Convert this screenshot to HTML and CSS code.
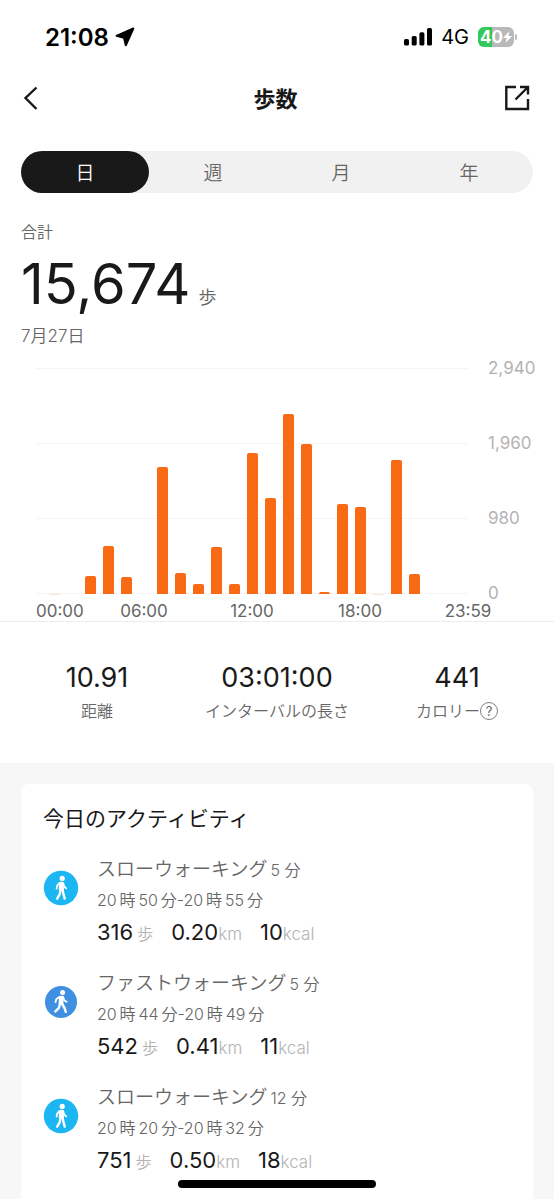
FILE: index.html
```html
<!DOCTYPE html>
<html lang="ja">
  <head>
    <meta charset="UTF-8" />
    <meta name="viewport" content="width=device-width, initial-scale=1.0" />
    <title>歩数</title>
    <link rel="stylesheet" href="styles.css">
  </head>
  <body>
    <div class="statusBar">
      <div class="statusTime">
        <span>21:08</span>
        <svg width="20" height="20" viewBox="0 0 20 20">
          <path d="M18.300 1.500 L1.500 8.800 L9 10.800 L10.800 18.300 Z" fill="#000" stroke="#000" stroke-width="2" stroke-linejoin="round" />
        </svg>
      </div>
      <div class="statusIcons">
        <svg width="28" height="18" viewBox="0 0 28 18">
          <rect x="0" y="11" width="5" height="6.500" rx="1.600" />
          <rect x="7.700" y="8" width="5" height="9.500" rx="1.600" />
          <rect x="15.400" y="4.300" width="5" height="13.200" rx="1.600" />
          <rect x="23" y="0" width="5" height="17.500" rx="1.600" />
        </svg>
        <span class="network">4G</span>
        <div class="battery">
          <span class="batteryLevel">40</span>
          <svg width="9" height="14" viewBox="0 0 10 14">
            <path d="M7 0.500 L0 8 H4 L3 13.500 L10 6 H6 Z" fill="#fff" />
          </svg>
        </div>
      </div>
    </div>

    <header class="navBar">
      <button type="button" class="iconButton" aria-label="戻る">
        <svg width="26" height="26" viewBox="0 0 26 26">
          <path d="M15.500 2.500 L4.500 13 L15.500 24" />
        </svg>
      </button>
      <h1 class="pageTitle">歩数</h1>
      <button type="button" class="iconButton" aria-label="共有">
        <svg width="26" height="26" viewBox="0 0 26 26">
          <path d="M12 2 H2.300 V24 H24 V14 M16 2 H24 V9.500 M23.500 2.500 L11.500 14.500" />
        </svg>
      </button>
    </header>

    <nav class="tabs">
      <button type="button" class="tab tabActive">日</button>
      <button type="button" class="tab">週</button>
      <button type="button" class="tab">月</button>
      <button type="button" class="tab">年</button>
    </nav>

    <section class="summary">
      <p class="summaryLabel">合計</p>
      <p class="summaryValue">15,674<span class="summaryUnit">歩</span></p>
      <p class="summaryLabel summaryDate">7月27日</p>
    </section>

    <section class="chart">
      <div class="plot">
        <div class="bars">
          <span class="bar barFaint" style="height: 0.1%"></span>
          <span class="bar" style="height: 0%"></span>
          <span class="bar" style="height: 8%"></span>
          <span class="bar" style="height: 21.4%"></span>
          <span class="bar" style="height: 7.7%"></span>
          <span class="bar" style="height: 0%"></span>
          <span class="bar" style="height: 56.4%"></span>
          <span class="bar" style="height: 9.3%"></span>
          <span class="bar" style="height: 4.6%"></span>
          <span class="bar" style="height: 20.9%"></span>
          <span class="bar" style="height: 4.5%"></span>
          <span class="bar" style="height: 62.6%"></span>
          <span class="bar" style="height: 42.6%"></span>
          <span class="bar" style="height: 79.5%"></span>
          <span class="bar" style="height: 66.3%"></span>
          <span class="bar" style="height: 0.7%"></span>
          <span class="bar" style="height: 39.8%"></span>
          <span class="bar" style="height: 38.4%"></span>
          <span class="bar barFaint" style="height: 0.2%"></span>
          <span class="bar" style="height: 59.3%"></span>
          <span class="bar" style="height: 8.7%"></span>
          <span class="bar" style="height: 0%"></span>
          <span class="bar" style="height: 0%"></span>
          <span class="bar" style="height: 0%"></span>
        </div>
        <div class="xAxis">
          <span class="hour0">00:00</span>
          <span class="hour6">06:00</span>
          <span class="hour12">12:00</span>
          <span class="hour18">18:00</span>
          <span class="hour24">23:59</span>
        </div>
      </div>
      <div class="yAxis">
        <span>2,940</span>
        <span>1,960</span>
        <span>980</span>
        <span>0</span>
      </div>
    </section>

    <section class="totals">
      <div class="total">
        <p class="totalValue">10.91</p>
        <p class="totalLabel">距離</p>
      </div>
      <div class="total">
        <p class="totalValue">03:01:00</p>
        <p class="totalLabel">インターバルの長さ</p>
      </div>
      <div class="total">
        <p class="totalValue">441</p>
        <p class="totalLabel">
          カロリー<button type="button" class="helpButton">?</button>
        </p>
      </div>
    </section>

    <main class="activities">
      <div class="card">
        <h2 class="cardTitle">今日のアクティビティ</h2>

        <article class="activity">
          <svg class="walkIcon" width="36" height="36" viewBox="0 0 36 36">
            <circle cx="18" cy="18" r="17.200" fill="#1cb7f3" />
            <use href="#slowWalk" />
          </svg>
          <div>
            <h3 class="activityName">スローウォーキング<span class="duration">5 分</span></h3>
            <p class="activityTime">20&thinsp;時&thinsp;50&thinsp;分-20&thinsp;時&thinsp;55&thinsp;分</p>
            <p class="activityStats">
              <span>316<small class="steps">歩</small></span>
              <span>0.20<small>km</small></span>
              <span>10<small>kcal</small></span>
            </p>
          </div>
        </article>

        <article class="activity">
          <svg class="walkIcon" width="36" height="36" viewBox="0 0 36 36">
            <circle cx="18" cy="18" r="16" fill="#3f8fe3" />
            <use href="#fastWalk" />
          </svg>
          <div>
            <h3 class="activityName">ファストウォーキング<span class="duration">5 分</span></h3>
            <p class="activityTime">20&thinsp;時&thinsp;44&thinsp;分-20&thinsp;時&thinsp;49&thinsp;分</p>
            <p class="activityStats">
              <span>542<small class="steps">歩</small></span>
              <span>0.41<small>km</small></span>
              <span>11<small>kcal</small></span>
            </p>
          </div>
        </article>

        <article class="activity">
          <svg class="walkIcon" width="36" height="36" viewBox="0 0 36 36">
            <circle cx="18" cy="18" r="17.200" fill="#1cb7f3" />
            <use href="#slowWalk" />
          </svg>
          <div>
            <h3 class="activityName">スローウォーキング<span class="duration">12 分</span></h3>
            <p class="activityTime">20&thinsp;時&thinsp;20&thinsp;分-20&thinsp;時&thinsp;32&thinsp;分</p>
            <p class="activityStats">
              <span>751<small class="steps">歩</small></span>
              <span>0.50<small>km</small></span>
              <span>18<small>kcal</small></span>
            </p>
          </div>
        </article>
      </div>
    </main>

    <div class="homeIndicator"></div>

    <svg class="sprite" width="0" height="0">
      <symbol id="slowWalk" viewBox="0 0 36 36">
        <circle cx="19.200" cy="8.400" r="2.600" fill="#fff" />
        <path d="M16.800 12.800 L19.800 12.600 L20.200 20 L16.600 20 Z" fill="#fff" stroke="#fff" stroke-width="1.600" stroke-linejoin="round" />
        <path d="M16.300 13.200 L14.200 15.500 L13.600 18.600 M20.300 13.500 L21.200 16.500 L23.200 18.300" class="limb" />
        <path d="M17.300 19.500 L16.800 24 L14.200 28.600 M19.300 19.500 L20.500 24 L21.700 28.600" class="leg" />
      </symbol>
      <symbol id="fastWalk" viewBox="0 0 36 36">
        <circle cx="19.600" cy="8.400" r="2.500" fill="#fff" />
        <path d="M16.800 12.800 L19.800 12.600 L19.600 20 L16.400 20 Z" fill="#fff" stroke="#fff" stroke-width="1.600" stroke-linejoin="round" />
        <path d="M16.300 13 L13.200 15.200 L12.600 18 M20.300 13.500 L21.400 16.500 L23.600 17.800" class="limb" />
        <path d="M17 19.500 L16 23.800 L12.400 27.400 M18.800 19.500 L21.300 23.500 L22.800 27.800" class="leg" />
      </symbol>
    </svg>
  </body>
</html>
```

FILE: styles.css
```css
* {
  box-sizing: border-box;
}
body {
  margin: 0;
  background-color: #fff;
  color: #191919;
  font-family: Inter, "Noto Sans CJK JP", sans-serif;
  font-size: 16px;
  min-height: 100vh;
  display: flex;
  flex-direction: column;
}
h1,
h2,
h3,
p {
  margin: 0;
  font-weight: 400;
}
button {
  background: none;
  border: none;
  padding: 0;
  font-family: inherit;
  color: inherit;
  cursor: pointer;
}
.statusBar {
  display: flex;
  justify-content: space-between;
  align-items: center;
  height: 74px;
  padding: 0 40px 0 45px;
  color: #000;
}
.statusTime {
  display: flex;
  align-items: center;
  gap: 6px;
  font-size: 24px;
  font-weight: 600;
}
.statusIcons {
  display: flex;
  align-items: center;
  gap: 9px;
}
.network {
  font-size: 20px;
}
.battery {
  display: flex;
  align-items: center;
  justify-content: center;
  width: 36px;
  height: 20px;
  border-radius: 6px;
  background: linear-gradient(to right, #34c759 40%, #b9b9b9 40%);
  color: #fff;
  position: relative;
}
.battery::after {
  content: "";
  position: absolute;
  right: -3px;
  top: 7px;
  width: 2px;
  height: 6px;
  border-radius: 0 2px 2px 0;
  background-color: #b9b9b9;
}
.batteryLevel {
  font-size: 17px;
  font-weight: 700;
}
.navBar {
  display: flex;
  justify-content: space-between;
  align-items: center;
  height: 48px;
  padding: 0 24px 0 21px;
}
.iconButton {
  display: flex;
}
.iconButton path {
  fill: none;
  stroke: #191919;
  stroke-width: 2.4;
}
.pageTitle {
  padding-bottom: 3px;
  font-size: 22px;
  font-weight: 700;
}
.tabs {
  display: flex;
  margin: 29px 21px 0;
  border-radius: 21px;
  background-color: #f1f1f1;
}
.tab {
  flex: 1;
  height: 42px;
  padding-bottom: 2px;
  border-radius: 21px;
  font-size: 19px;
  font-weight: 350;
  color: #666;
}
.tabActive {
  background-color: #191919;
  color: #fff;
}
.summary {
  padding: 28px 21px 0;
}
.summaryLabel {
  font-size: 16px;
  font-weight: 350;
  line-height: 22px;
  color: #666;
}
.summaryDate {
  font-size: 17px;
}
.summaryValue {
  font-size: 56px;
  line-height: 82px;
}
.summaryUnit {
  margin-left: 8px;
  font-size: 18px;
  font-weight: 350;
  line-height: 1;
  color: #666;
}
.chart {
  display: flex;
  padding: 21px 0 0 36px;
  border-bottom: 1px solid #ededed;
}
.plot {
  flex: 1;
}
.bars {
  display: grid;
  grid-template-columns: repeat(24, 1fr);
  justify-items: center;
  align-items: end;
  height: 226px;
  padding-left: 9px;
  margin-right: -9px;
  background: repeating-linear-gradient(to bottom, #f5f5f5 0 1px, transparent 1px 75px) 0 0 / calc(100% - 9px) 100% no-repeat;
}
.bar {
  width: 11px;
  border-radius: 2px 2px 0 0;
  background-color: #f96a15;
}
.barFaint {
  opacity: 0.2;
}
.xAxis {
  display: grid;
  grid-template-columns: repeat(54, 1fr);
  width: 112.5%;
  padding-top: 7px;
  font-size: 17px;
  line-height: 20px;
  color: #666;
}
.xAxis span {
  justify-self: center;
}
.xAxis .hour0 {
  grid-column: 1 / 7;
  justify-self: start;
}
.hour6 {
  grid-column: 10 / 16;
}
.hour12 {
  grid-column: 22 / 28;
}
.hour18 {
  grid-column: 34 / 40;
}
.hour24 {
  grid-column: 46 / 52;
}
.yAxis {
  display: flex;
  flex-direction: column;
  gap: 55px;
  width: 86px;
  padding-left: 20px;
  margin-top: -10px;
  font-size: 17px;
  line-height: 20px;
  color: #b3b3b3;
}
.totals {
  display: grid;
  grid-template-columns: repeat(3, 1fr);
  padding: 36px 7px 39px;
  text-align: center;
}
.totalValue {
  font-size: 27px;
  line-height: 40px;
}
.totalLabel {
  display: flex;
  justify-content: center;
  align-items: center;
  font-size: 16px;
  font-weight: 350;
  line-height: 26px;
  color: #666;
}
.helpButton {
  width: 18px;
  height: 18px;
  border: 1px solid #808080;
  border-radius: 50%;
  font-size: 13px;
  line-height: 16px;
  color: #666;
}
.activities {
  flex: 1;
  display: flex;
  padding: 21px 21px 0;
  background-color: #f7f7f7;
}
.card {
  flex: 1;
  padding: 20px 22px 16px;
  border-radius: 8px 8px 0 0;
  background-color: #fff;
}
.cardTitle {
  font-size: 21px;
  line-height: 30px;
  margin-bottom: 20px;
}
.activity {
  display: flex;
  align-items: flex-start;
  gap: 18px;
  margin-bottom: 18px;
}
.activity:last-child {
  margin-bottom: 0;
}
.walkIcon {
  margin-top: 16px;
}
.activityName {
  font-size: 19px;
  font-weight: 350;
  line-height: 32px;
  color: #666;
}
.duration {
  margin-left: 3px;
  font-size: 16px;
  line-height: 1;
}
.activityTime {
  font-size: 16px;
  font-weight: 350;
  line-height: 28px;
  color: #666;
}
.activityStats {
  display: flex;
  gap: 18px;
  font-size: 22px;
  line-height: 36px;
}
.activityStats small {
  font-size: 17px;
  font-weight: 350;
  line-height: 1;
  color: #b3b3b3;
}
.activityStats .steps {
  margin-left: 4px;
  font-size: 16px;
}
.limb,
.leg {
  fill: none;
  stroke: #fff;
  stroke-width: 1.8;
  stroke-linecap: round;
  stroke-linejoin: round;
}
.leg {
  stroke-width: 2.4;
}
.sprite {
  position: absolute;
}
.homeIndicator {
  position: fixed;
  left: 50%;
  bottom: 11px;
  width: 198px;
  height: 8px;
  border-radius: 4px;
  background-color: #000;
  transform: translateX(-50%);
}
```
